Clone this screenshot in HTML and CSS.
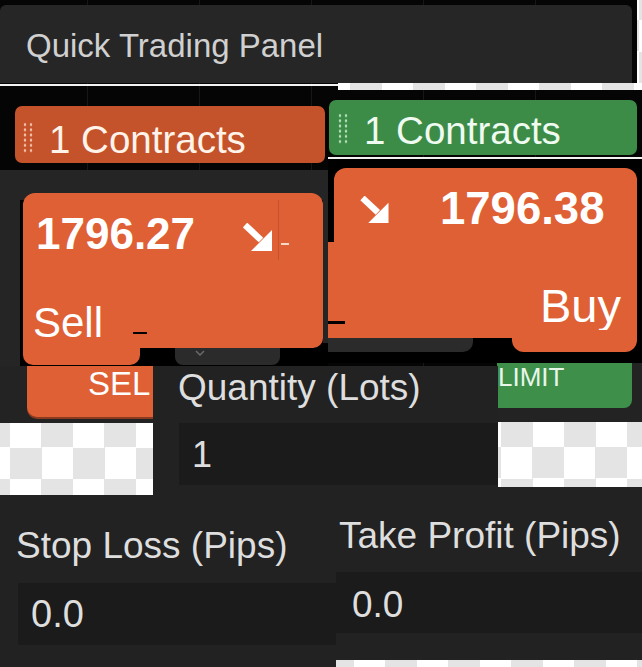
FILE: index.html
```html
<!DOCTYPE html>
<html lang="en">
<head>
<meta charset="utf-8">
<title>Quick Trading Panel</title>
<link rel="stylesheet" href="styles.css">
</head>
<body>
<div class="canvas">
  <div class="frag checker ck-col"></div>
  <div class="frag title-panel">Quick Trading Panel</div>
  <div class="frag checker ck-strip"></div>
  <div class="frag white-line wl-1"></div>

  <div class="frag contracts contracts-sell"><span class="grip"></span><span class="contracts-text">1 Contracts</span></div>
  <div class="frag contracts contracts-buy"><span class="grip"></span><span class="contracts-text">1 Contracts</span></div>
  <div class="frag white-line wl-2"></div>

  <div class="frag sell-bg"></div>
  <div class="frag sell-frame"></div>
  <div class="frag sell-notch"></div>
  <div class="frag sell-btn">
    <div class="price-row">
      <span class="price">1796.27</span>
      <svg class="arrow sell-arrow" viewBox="0 0 30 28" width="30" height="28"><line x1="2" y1="2" x2="18" y2="17" stroke="#fff" stroke-width="6.5"/><polygon points="29,7 29,28 8,28" fill="#fff"/></svg>
      <span class="tick"></span>
    </div>
    <div class="sell-label">Sell</div>
    <span class="black-dash sell-dash"></span>
  </div>
  <div class="frag sell-tail"></div>
  <div class="frag sell-bar"><svg viewBox="0 0 10 6" width="10" height="6"><path d="M1 1 L5 5 L9 1" fill="none" stroke="#6a6a6a" stroke-width="1.5"/></svg></div>

  <div class="frag buy-frame"></div>
  <div class="frag buy-top">
    <svg class="arrow buy-arrow" viewBox="0 0 30 28" width="30" height="27"><line x1="2" y1="2" x2="18" y2="17" stroke="#fff" stroke-width="6.5"/><polygon points="29,7 29,28 8,28" fill="#fff"/></svg>
    <span class="price buy-price">1796.38</span>
  </div>
  <div class="frag buy-mid">
    <span class="buy-label">Buy</span>
    <span class="black-dash buy-dash"></span>
  </div>
  <div class="frag buy-tail"></div>
  <div class="frag buy-bar"></div>

  <div class="frag sell2-bg"><div class="sell2-btn">SEL</div></div>
  <div class="frag checker ck-left"></div>

  <div class="frag limit-bg"><div class="limit-btn">LIMIT</div></div>
  <div class="frag checker ck-right"></div>

  <div class="frag field qty">
    <div class="field-label">Quantity (Lots)</div>
    <div class="field-input">1</div>
  </div>

  <div class="frag field sl">
    <div class="field-label">Stop Loss (Pips)</div>
    <div class="field-input">0.0</div>
  </div>

  <div class="frag field tp">
    <div class="field-label">Take Profit (Pips)</div>
    <div class="field-input">0.0</div>
  </div>
  <div class="frag checker ck-bottom"></div>
</div>
</body>
</html>
```

FILE: styles.css
```css
* { box-sizing: border-box; }
html, body { margin: 0; padding: 0; }
body {
  background: #050505;
  font-family: "Liberation Sans", Arial, sans-serif;
}
.canvas {
  position: relative;
  width: 642px;
  height: 667px;
  overflow: hidden;
  background-color: #050505;
  background-image: linear-gradient(90deg, #171717 1px, transparent 1px);
  background-size: 112px 100%;
  background-position: 87px 0;
}
.frag { position: absolute; }

.checker {
  background-color: #fff;
  background-image: conic-gradient(#e4e4e4 25%, #fff 0 50%, #e4e4e4 0 75%, #fff 0);
  background-size: 63px 63px;
}
.ck-col { left: 637px; top: 0; width: 5px; height: 90px; background-position: 2px 20px; }
.ck-strip { left: 338px; top: 83px; width: 304px; height: 7px; background-position: 12px 20px; }
.ck-left { left: 0; top: 423px; width: 153px; height: 72px; background-position: 10px -7px; }
.ck-right { left: 498px; top: 422px; width: 144px; height: 65px; background-position: 3px 25px; }
.ck-bottom { left: 336px; top: 660px; width: 306px; height: 7px; background-position: 18px 0; }

.white-line { background: #f2f2f2; height: 2px; }
.wl-1 { left: 0; top: 84px; width: 338px; }
.wl-2 { left: 328px; top: 157px; width: 314px; }

.title-panel {
  left: 0; top: 5px; width: 632px; height: 78px;
  background: #262626;
  border-radius: 6px 6px 0 0;
  padding: 24px 0 0 26px;
  color: #d0d0d0;
  font-size: 33px;
  line-height: 1;
}

.contracts {
  display: flex;
  align-items: flex-start;
  gap: 15px;
  border-radius: 7px;
  color: #fff3ea;
  font-size: 38.5px;
  line-height: 1;
}
.contracts-sell {
  left: 15px; top: 106px; width: 310px; height: 57px;
  background: #c4532b;
  padding: 15px 0 0 7px;
}
.contracts-sell .grip { margin-top: 1px; }
.contracts-buy {
  left: 329px; top: 100px; width: 308px; height: 55px;
  background: #3c8c48;
  padding: 12px 0 0 8px;
  color: #effaf0;
}
.contracts-buy .grip { margin-top: 1px; }
.grip {
  display: block;
  width: 12px; height: 31px;
  background-image: radial-gradient(circle, #f0c2ab 1.2px, transparent 1.6px);
  background-size: 6px 5.2px;
}
.contracts-buy .grip {
  background-image: radial-gradient(circle, #b5dfbb 1.2px, transparent 1.6px);
}

.sell-bg { left: 0; top: 170px; width: 328px; height: 196px; background: #252525; }
.sell-frame { left: 20px; top: 200px; width: 303px; height: 166px; background: #000; }
.sell-notch { left: 280px; top: 343px; width: 48px; height: 23px; background: #000; }

.sell-btn {
  left: 23px; top: 193px; width: 300px; height: 155px;
  background: #e06035;
  border-radius: 12px 12px 10px 0;
  padding: 19px 0 0 13px;
  display: flex;
  flex-direction: column;
  color: #fff;
}
.sell-btn::after {
  content: "";
  position: absolute;
  left: 255px; top: 7px;
  width: 1px; height: 60px;
  background: rgba(120, 40, 10, 0.25);
}
.price-row { display: flex; align-items: flex-start; height: 44px; }
.price { font-weight: 700; font-size: 44px; line-height: 1; }
.sell-arrow { margin: 11px 0 0 48px; flex: none; }
.tick { width: 8px; height: 2px; background: #f7d9c9; margin: 31px 0 0 8px; }
.sell-label { font-size: 42px; line-height: 1; margin: 46px 0 0 -3px; }
.black-dash { position: absolute; background: #000; }
.sell-dash { left: 110px; top: 139px; width: 14px; height: 2px; }

.sell-tail {
  left: 23px; top: 340px; width: 117px; height: 25px;
  background: #e06035;
  border-radius: 0 0 10px 10px;
}
.sell-bar {
  left: 175px; top: 348px; width: 105px; height: 17px;
  background: #2b2b2b;
  border-radius: 0 0 8px 8px;
  display: flex;
  padding: 2px 0 0 20px;
}

.buy-frame { left: 328px; top: 159px; width: 314px; height: 204px; background: #000; }
.buy-top {
  left: 334px; top: 168px; width: 303px; height: 74px;
  background: #e06035;
  border-radius: 12px 12px 0 0;
  display: flex;
  align-items: flex-start;
  padding-left: 26px;
  color: #fff;
}
.buy-arrow { margin-top: 28px; flex: none; }
.buy-price { font-size: 45.5px; margin: 18px 0 0 50px; }
.buy-mid {
  left: 328px; top: 242px; width: 309px; height: 96px;
  background: #e06035;
  padding: 40px 16px 0 0;
  text-align: right;
  color: #fff;
}
.buy-label { font-size: 47px; line-height: 1; }
.buy-dash { left: 0; top: 79px; width: 17px; height: 3px; }
.buy-tail {
  left: 512px; top: 330px; width: 125px; height: 22px;
  background: #e06035;
  border-radius: 0 0 12px 12px;
}
.buy-bar {
  left: 328px; top: 338px; width: 145px; height: 14px;
  background: #2b2b2b;
  border-radius: 0 0 10px 0;
}

.sell2-bg {
  left: 0; top: 366px; width: 153px; height: 57px;
  background: #232323;
  padding: 0 0 0 27px;
}
.sell2-btn {
  width: 126px; height: 51px;
  background: #e06035;
  border-radius: 0 0 0 10px;
  box-shadow: 0 2px 0 #8a3a1f;
  color: #fff;
  font-size: 33px;
  line-height: 36px;
  padding: 0 0 0 61px;
}

.limit-bg {
  left: 497px; top: 363px; width: 145px; height: 59px;
  background: #232323;
}
.limit-btn {
  width: 135px; height: 45px;
  background: #3d8f4a;
  border-radius: 0 0 8px 0;
  color: #e8f6ea;
  font-size: 26px;
  line-height: 28px;
  padding: 0 0 0 1px;
}

.field { background: #222; color: #dedede; display: flex; flex-direction: column; align-items: flex-start; }
.field-label { font-size: 37px; line-height: 1; }
.field-input { background: #1b1b1b; line-height: 1; }

.qty { left: 153px; top: 366px; width: 345px; height: 129px; padding: 3px 0 0 25px; }
.qty .field-input {
  margin: 17px 0 0 1px; width: 319px; height: 62px;
  font-size: 36px; padding: 13.5px 0 0 13px;
}
.sl { left: 0; top: 495px; width: 336px; height: 172px; padding: 32px 0 0 16px; }
.sl .field-input {
  margin: 19px 0 0 2px; width: 318px; height: 62px;
  font-size: 38px; padding: 12px 0 0 13px;
}
.tp { left: 336px; top: 487px; width: 306px; height: 173px; padding: 30px 0 0 3px; }
.tp .field-input {
  margin: 18px 0 0 -3px; width: 306px; height: 61px;
  font-size: 37px; padding: 13.7px 0 0 16px;
}
```
